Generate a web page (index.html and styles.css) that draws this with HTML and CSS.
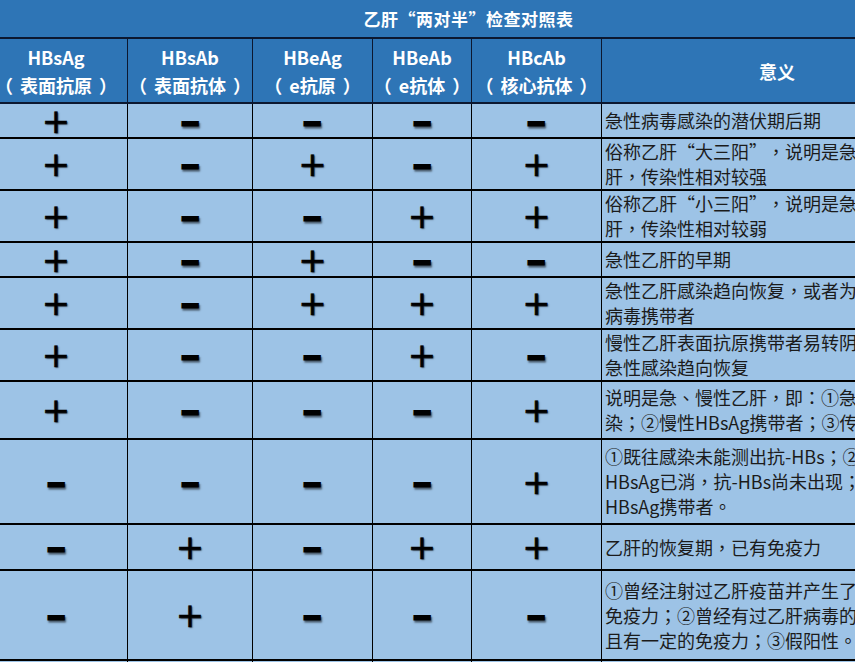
FILE: index.html
```html
<!DOCTYPE html>
<html lang="zh-CN">
<head>
<meta charset="utf-8">
<title>乙肝“两对半”检查对照表</title>
<link rel="stylesheet" href="styles.css">
</head>
<body>
<div class="frame">
<table class="chart">
  <colgroup>
    <col class="c1"><col class="c2"><col class="c3"><col class="c4"><col class="c5"><col class="c6">
  </colgroup>
  <tr class="title-row"><td colspan="6">乙肝“两对半”检查对照表</td></tr>
  <tr class="head-row" lang="zh-Hant">
    <th>HBsAg<br><span class="pl">（</span>表面抗原<span class="pr">）</span></th>
    <th>HBsAb<br><span class="pl">（</span>表面抗体<span class="pr">）</span></th>
    <th>HBeAg<br><span class="pl">（</span>e抗原<span class="pr">）</span></th>
    <th>HBeAb<br><span class="pl">（</span>e抗体<span class="pr">）</span></th>
    <th>HBcAb<br><span class="pl">（</span>核心抗体<span class="pr">）</span></th>
    <th>意义</th>
  </tr>
  <tr class="r35">
    <td class="s"><span class="p">+</span></td><td class="s"><span class="m">−</span></td><td class="s"><span class="m">−</span></td><td class="s"><span class="m">−</span></td><td class="s"><span class="m">−</span></td>
    <td class="t" lang="zh-Hant">急性病毒感染的潜伏期后期</td>
  </tr>
  <tr class="r52">
    <td class="s"><span class="p">+</span></td><td class="s"><span class="m">−</span></td><td class="s"><span class="p">+</span></td><td class="s"><span class="m">−</span></td><td class="s"><span class="p">+</span></td>
    <td class="t" lang="zh-Hant">俗称乙肝<span class="qo">“</span>大三阳<span class="qc">”</span>，说明是急性或慢性乙<br>肝，传染性相对较强</td>
  </tr>
  <tr class="r52">
    <td class="s"><span class="p">+</span></td><td class="s"><span class="m">−</span></td><td class="s"><span class="m">−</span></td><td class="s"><span class="p">+</span></td><td class="s"><span class="p">+</span></td>
    <td class="t" lang="zh-Hant">俗称乙肝<span class="qo">“</span>小三阳<span class="qc">”</span>，说明是急性或慢性乙<br>肝，传染性相对较弱</td>
  </tr>
  <tr class="r35">
    <td class="s"><span class="p">+</span></td><td class="s"><span class="m">−</span></td><td class="s"><span class="p">+</span></td><td class="s"><span class="m">−</span></td><td class="s"><span class="m">−</span></td>
    <td class="t" lang="zh-Hant">急性乙肝的早期</td>
  </tr>
  <tr class="r51">
    <td class="s"><span class="p">+</span></td><td class="s"><span class="m">−</span></td><td class="s"><span class="p">+</span></td><td class="s"><span class="p">+</span></td><td class="s"><span class="p">+</span></td>
    <td class="t" lang="zh-Hant">急性乙肝感染趋向恢复，或者为慢性乙肝<br>病毒携带者</td>
  </tr>
  <tr class="r52">
    <td class="s"><span class="p">+</span></td><td class="s"><span class="m">−</span></td><td class="s"><span class="m">−</span></td><td class="s"><span class="p">+</span></td><td class="s"><span class="m">−</span></td>
    <td class="t" lang="zh-Hant">慢性乙肝表面抗原携带者易转阴，或者是<br>急性感染趋向恢复</td>
  </tr>
  <tr class="r58">
    <td class="s"><span class="p">+</span></td><td class="s"><span class="m">−</span></td><td class="s"><span class="m">−</span></td><td class="s"><span class="m">−</span></td><td class="s"><span class="p">+</span></td>
    <td class="t" lang="zh-Hant">说明是急、慢性乙肝，即：①急性HBV感<br>染；②慢性HBsAg携带者；③传染性弱</td>
  </tr>
  <tr class="r85">
    <td class="s"><span class="m">−</span></td><td class="s"><span class="m">−</span></td><td class="s"><span class="m">−</span></td><td class="s"><span class="m">−</span></td><td class="s"><span class="p">+</span></td>
    <td class="t" lang="zh-Hant">①既往感染未能测出抗-HBs；②恢复期<br>HBsAg已消，抗-HBs尚未出现；③无症状<br>HBsAg携带者。</td>
  </tr>
  <tr class="r46">
    <td class="s"><span class="m">−</span></td><td class="s"><span class="p">+</span></td><td class="s"><span class="m">−</span></td><td class="s"><span class="p">+</span></td><td class="s"><span class="p">+</span></td>
    <td class="t" lang="zh-Hant">乙肝的恢复期，已有免疫力</td>
  </tr>
  <tr class="r90">
    <td class="s"><span class="m">−</span></td><td class="s"><span class="p">+</span></td><td class="s"><span class="m">−</span></td><td class="s"><span class="m">−</span></td><td class="s"><span class="m">−</span></td>
    <td class="t" lang="zh-Hant">①曾经注射过乙肝疫苗并产生了抗体，有<br>免疫力；②曾经有过乙肝病毒的感染并<br>且有一定的免疫力；③假阳性。</td>
  </tr>
  <tr class="r40">
    <td class="s"></td><td class="s"></td><td class="s"></td><td class="s"></td><td class="s"></td><td class="t"></td>
  </tr>
</table>
</div>
</body>
</html>
```
FILE: styles.css
```css
html, body {
  margin: 0;
  padding: 0;
  background: #9dc3e6;
}
.frame {
  width: 855px;
  height: 662px;
  overflow: hidden;
}
.chart {
  margin-left: -16px;
  width: 968px;
  table-layout: fixed;
  border-collapse: collapse;
  font-family: "Noto Sans CJK SC", "Noto Sans", sans-serif;
}
.c1 { width: 143px; }
.c2 { width: 125px; }
.c3 { width: 120px; }
.c4 { width: 99px; }
.c5 { width: 130px; }
.c6 { width: 351px; }

.title-row td {
  height: 37px;
  padding: 0;
  background: #2e75b6;
  color: #fff;
  font-weight: bold;
  font-size: 17px;
  text-align: center;
  border-bottom: 2px solid #0c1830;
  letter-spacing: 0.5px;
}
.head-row th {
  height: 63px;
  padding: 0;
  background: #2e75b6;
  color: #fff;
  font-family: "Noto Sans CJK SC", sans-serif;
  font-weight: bold;
  font-size: 18px;
  line-height: 28px;
  text-align: center;
  border: 1px solid #0c1830;
  border-top-width: 2px;
  border-bottom-width: 2px;
}
.pl {
  display: inline-block;
  margin: 0 7px 0 -7px;
}
.pr {
  display: inline-block;
  margin: 0 -7px 0 7px;
}
.chart td.s,
.chart td.t {
  background: #9dc3e6;
  border-left: 1px solid #000;
  border-right: 1px solid #000;
  border-bottom: 2px solid #000;
  padding: 0;
  vertical-align: middle;
}
.s {
  text-align: center;
  font-family: "DejaVu Sans", sans-serif;
  font-weight: normal;
  font-size: 34px;
  line-height: 28px;
  color: #000;
}
.p, .m {
  display: inline-block;
  height: 28px;
  line-height: 28px;
  text-shadow: 1px 1px 1.5px rgba(0, 0, 0, 0.55);
}
.p {
  -webkit-text-stroke: 0.6px #000;
}
.m {
  transform: scale(0.82, 1.9);
}
.t {
  padding-left: 3px !important;
  text-align: left;
  font-family: "Noto Sans CJK SC", sans-serif;
  font-size: 18px;
  line-height: 25px;
  color: #1b1b1b;
  white-space: nowrap;
  overflow: hidden;
}
.qo, .qc {
  display: inline-block;
  width: 18px;
}
.qo { text-align: right; }
.qc { text-align: left; }
.r35 td { height: 33px; }
.r52 td { height: 50px; }
.r51 td { height: 49px; }
.r58 td { height: 56px; }
.r85 td { height: 83px; }
.r46 td { height: 44px; }
.r90 td { height: 88px; }
.r40 td { height: 38px; }
```
